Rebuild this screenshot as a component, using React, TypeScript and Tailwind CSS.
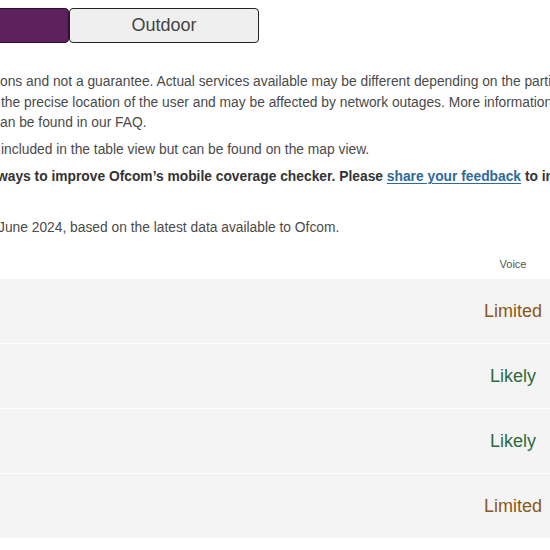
const rows = [
  { status: 'Limited', color: 'text-[#8a5716]' },
  { status: 'Likely', color: 'text-[#2c6b40]' },
  { status: 'Likely', color: 'text-[#2c6b40]' },
  { status: 'Limited', color: 'text-[#8a5716]' },
];

export default function App() {
  return (
    <div className="w-[550px] h-[550px] overflow-hidden bg-white font-['Liberation_Sans',Arial,sans-serif] text-[13.8px] text-[#4a4a4a]">
      {/* Indoor / Outdoor toggle */}
      <div className="flex pt-[8px]">
        <button className="ml-[-121px] w-[190px] h-[35px] rounded-[4px] border border-[#2b0f2a] bg-[#5f215e] text-[18px] text-white">
          Indoor
        </button>
        <button className="w-[190px] h-[35px] rounded-[4px] border border-[#222] bg-[#efefef] text-[18px] text-[#444]">
          Outdoor
        </button>
      </div>

      {/* Disclaimer text */}
      <div className="mt-[29px] leading-[20.5px] whitespace-nowrap">
        <p>ons and not a guarantee. Actual services available may be different depending on the particular handset</p>
        <p className="ml-[1px]">the precise location of the user and may be affected by network outages. More information</p>
        <p>an be found in our FAQ.</p>
      </div>

      <p className="mt-[6px] ml-[1px] leading-[20.5px] whitespace-nowrap">
        included in the table view but can be found on the map view.
      </p>

      <p className="mt-[7px] ml-[-3px] leading-[20.5px] whitespace-nowrap font-bold text-[#333]">
        ways to improve Ofcom’s mobile coverage checker. Please{' '}
        <a href="#" className="text-[#2d6a9b] underline underline-offset-2">
          share your feedback
        </a>{' '}
        to inform us
      </p>

      <p className="mt-[30px] ml-[-2px] leading-[20.5px] whitespace-nowrap">
        June 2024, based on the latest data available to Ofcom.
      </p>

      {/* Results table */}
      <div className="mt-[14px]">
        <div className="flex h-[24px] items-center">
          <div className="ml-auto w-[74px] text-center text-[11px] text-[#555]">Voice</div>
        </div>
        <div className="mt-[3px]">
          {rows.map((row, i) => (
            <div key={i} className="flex h-[65px] items-center border-b border-white bg-[#f4f4f4]">
              <div className={`ml-auto w-[74px] text-center text-[18px] ${row.color}`}>{row.status}</div>
            </div>
          ))}
        </div>
      </div>
    </div>
  );
}
